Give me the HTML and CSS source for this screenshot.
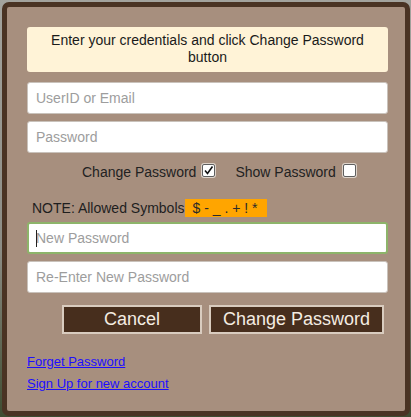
FILE: index.html
```html
<!DOCTYPE html>
<html>
<head>
<meta charset="utf-8">
<link rel="stylesheet" href="styles.css">
</head>
<body>
<div class="dialog">
  <div class="notice">Enter your credentials and click Change Password button</div>
  <input class="field first" type="text" placeholder="UserID or Email">
  <input class="field" type="password" placeholder="Password">
  <div class="checks">
    <span class="label">Change Password</span>
    <span class="box checked"><svg width="11" height="11" viewBox="0 0 11 11"><path d="M2 5.5 L4.5 8.5 L9.5 1.5" fill="none" stroke="#111" stroke-width="1.6"/></svg></span>
    <span class="label show">Show Password</span>
    <span class="box"></span>
  </div>
  <div class="note">NOTE: Allowed Symbols<span class="symbols">$ - _ . + ! *</span></div>
  <div class="focus-wrap">
    <input class="field focused" type="password" placeholder="New Password">
    <span class="caret"></span>
  </div>
  <input class="field" type="password" placeholder="Re-Enter New Password">
  <div class="buttons">
    <button class="btn cancel">Cancel</button>
    <button class="btn change">Change Password</button>
  </div>
  <div class="links">
    <a href="#">Forget Password</a>
    <a href="#">Sign Up for new account</a>
  </div>
</div>
</body>
</html>
```

FILE: styles.css
```css
html, body {
  margin: 0;
  padding: 0;
}
body {
  width: 411px;
  height: 417px;
  overflow: hidden;
  background: linear-gradient(#a3a39d, #8c8c84 60%, #3e4c30);
  font-family: "Liberation Sans", Arial, sans-serif;
}
.dialog {
  box-sizing: border-box;
  width: 408px;
  height: 414px;
  margin: 2px 0 0 2px;
  border: 5px solid #4a3323;
  border-radius: 7px;
  background: #a78f7e;
  padding: 20px 17px 0 20px;
  display: flex;
  flex-direction: column;
}
.notice {
  box-sizing: border-box;
  height: 45px;
  background: #fff3d7;
  border-radius: 3px;
  padding: 5px 10px;
  font-size: 14px;
  line-height: 17px;
  text-align: center;
  color: #1a1a1a;
}
.field {
  box-sizing: border-box;
  display: block;
  width: 361px;
  height: 32px;
  margin: 7px 0 0 0;
  padding: 0 8px;
  border: 1px solid #c9c2bb;
  border-radius: 3px;
  background: #fff;
  font-family: "Liberation Sans", Arial, sans-serif;
  font-size: 14px;
  color: #333;
  outline: none;
}
.field.first {
  margin-top: 10px;
}
.field::placeholder {
  color: #9d9d9d;
}
.checks {
  display: flex;
  align-items: center;
  height: 20px;
  margin-top: 9px;
  padding-left: 55px;
  font-size: 14px;
  color: #222;
}
.label.show {
  margin-left: 20px;
}
.box {
  box-sizing: border-box;
  width: 13px;
  height: 13px;
  margin-left: 6px;
  margin-top: -3px;
  background: #fff;
  border: 1px solid #5f5f5f;
  border-radius: 2px;
  box-shadow: 0 0 0 1px #ddd3ca;
  display: flex;
  align-items: center;
  justify-content: center;
}
.box svg {
  display: block;
}
.checks .box:last-child {
  margin-left: 7px;
}
.note {
  margin-top: 17px;
  height: 18px;
  line-height: 18px;
  padding-left: 5px;
  font-size: 14px;
  color: #1e1e1e;
}
.symbols {
  background: #ffa500;
  padding: 1px 10px 1px 8px;
  color: #2a2a2a;
}
.focus-wrap {
  position: relative;
  margin-top: 5px;
}
.focus-wrap .field {
  margin-top: 0;
}
.field.focused {
  border: 2px solid #8db46a;
  padding-left: 7px;
}
.caret {
  position: absolute;
  left: 9px;
  top: 8px;
  width: 1px;
  height: 17px;
  background: #222;
}
.buttons {
  display: flex;
  justify-content: flex-end;
  gap: 7px;
  margin-top: 12px;
  padding-right: 4px;
}
.btn {
  box-sizing: border-box;
  height: 29px;
  background: #472e1d;
  border: 2px solid #d9ccbf;
  color: #f4ece2;
  font-family: "Liberation Sans", Arial, sans-serif;
  font-size: 18px;
  padding: 0;
  line-height: 25px;
}
.cancel {
  width: 140px;
}
.change {
  width: 175px;
}
.links {
  display: flex;
  flex-direction: column;
  margin-top: 17px;
  font-size: 13px;
  line-height: 22px;
}
.links a {
  color: #1d0eff;
  text-decoration: underline;
  align-self: flex-start;
}
```
